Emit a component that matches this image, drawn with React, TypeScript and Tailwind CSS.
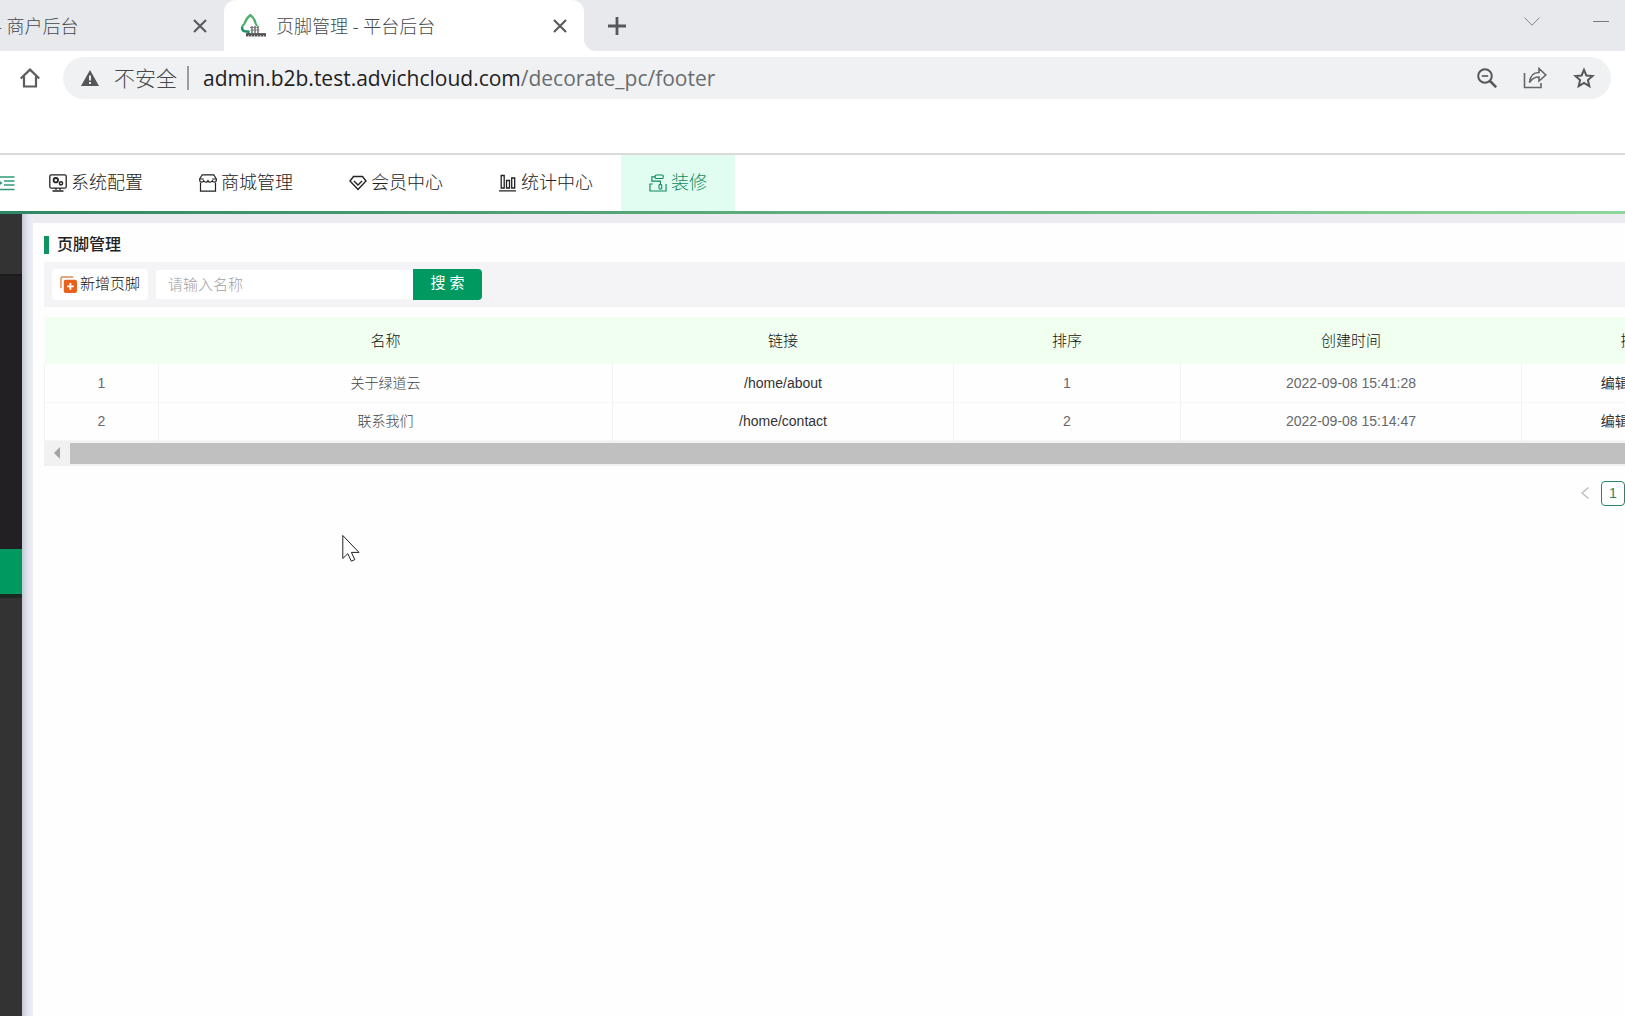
import { useState, type FormEvent, type ReactNode } from 'react';

type FooterRow = {
  id: number;
  name: string;
  link: string;
  sort: number;
  createdAt: string;
};

const rows: FooterRow[] = [
  { id: 1, name: '关于绿道云', link: '/home/about', sort: 1, createdAt: '2022-09-08 15:41:28' },
  { id: 2, name: '联系我们', link: '/home/contact', sort: 2, createdAt: '2022-09-08 15:14:47' },
];

const CloseIcon = () => (
  <svg className="size-4" viewBox="0 0 16 16" fill="none" stroke="#5a5d60" strokeWidth="2.2">
    <path d="M2 2l12 12M14 2L2 14" />
  </svg>
);

const LogoIcon = () => (
  <svg className="h-6 w-7" viewBox="0 0 28 24" fill="none">
    <path
      d="M9 17.5H6C3 17.5 1.500 15.500 2.200 13c.5-1.700 1.800-2 2.300-3.500C5.500 6.500 7 3.500 10.500 1c3 2.500 4.500 5 5.200 8.500.3 1 1 1.500 1.300 2.500"
      stroke="#4fae6b"
      strokeWidth="2.200"
    />
    <path d="M2.200 13c-.5 3 1.500 4.500 3.800 4.500h2.500v4" stroke="#1f8f68" strokeWidth="2.200" />
    <path d="M10 13.500h9M10.500 16h9" stroke="#888" strokeWidth="1.200" />
    <path d="M12 12v7M15 12v7M18 12v7" stroke="#777" strokeWidth="1.600" />
    <path d="M6 20.800h20" stroke="#555" strokeWidth="3.400" />
    <path d="M8 22h18" stroke="#fff" strokeWidth="1" strokeDasharray="1 2" />
  </svg>
);

const ConfigIcon = () => (
  <svg className="size-[18px]" viewBox="0 0 18 18" fill="none" stroke="currentColor" strokeWidth="1.300">
    <rect x=".8" y=".8" width="16.400" height="13.400" rx="1.500" />
    <circle cx="6.800" cy="6.200" r="2.200" strokeWidth="1.800" />
    <circle cx="12" cy="9.300" r="1.600" strokeWidth="1.500" />
    <path d="M7 14v2M11 14v2M3.500 17h11" />
  </svg>
);

const ShopIcon = () => (
  <svg className="size-[18px]" viewBox="0 0 18 18" fill="none" stroke="currentColor" strokeWidth="1.200">
    <path d="M3.200.8h11.600L17.300 5v1.500c0 2-3 2-4 .2-1 2-3.500 2-4.300 0-.8 2-3.300 2-4.300 0-1 1.800-4 1.800-4-.2V5z" />
    <path d="M.8 5h4M13.200 5h4M1.500 8.500v8.700h15V8.500" />
  </svg>
);

const MemberIcon = () => (
  <svg className="size-[18px]" viewBox="0 0 18 18" fill="none" stroke="currentColor" strokeWidth="1.400">
    <path d="M4.500 2.500h9l3.500 4.500-8 8.500L1 7z" />
    <path d="M5 7l4 4 4-4" />
  </svg>
);

const ChartIcon = () => (
  <svg className="size-[18px]" viewBox="0 0 18 18" fill="none" stroke="currentColor" strokeWidth="1.300">
    <path d="M0 16.800h17M2.200 1.500h3v12.500h-3zM7.500 6.500h3v7.500h-3zM12.700 4h3v10h-3z" />
  </svg>
);

const DecorateIcon = () => (
  <svg className="size-[18px]" viewBox="0 0 19 19" fill="none" stroke="currentColor" strokeWidth="1.200">
    <rect x="6.500" y="1" width="8.500" height="3.800" rx="1.200" />
    <path d="M6.500 3H3v4.500h9V11" />
    <rect x="10.500" y="11" width="3" height="5" rx="1.500" />
    <path d="M4 10.500H1v7.500h17v-7.500" />
  </svg>
);

const menus: { label: string; icon: ReactNode; active?: boolean }[] = [
  { label: '系统配置', icon: <ConfigIcon /> },
  { label: '商城管理', icon: <ShopIcon /> },
  { label: '会员中心', icon: <MemberIcon /> },
  { label: '统计中心', icon: <ChartIcon /> },
  { label: '装修', icon: <DecorateIcon />, active: true },
];

const BrowserTabs = () => (
  <div className="flex h-[51px] bg-[#e8e9ed] font-['Noto_Sans','Noto_Sans_CJK_SC',sans-serif] text-lg font-light text-[#46494c]">
    <div className="flex w-[224px] items-center justify-between rounded-br-xl bg-[#e8e9ed] pr-4">
      <span className="-ml-1 whitespace-pre">- 商户后台</span>
      <button aria-label="关闭"><CloseIcon /></button>
    </div>
    <div className="flex w-[360px] items-center rounded-t-xl bg-white px-4">
      <LogoIcon />
      <span className="ml-2 flex-1">页脚管理 - 平台后台</span>
      <button aria-label="关闭"><CloseIcon /></button>
    </div>
    <div className="flex flex-1 bg-white">
      <div className="flex flex-1 items-center justify-between rounded-bl-xl bg-[#e8e9ed] pl-6">
        <button aria-label="新标签页">
          <svg className="size-[18px]" viewBox="0 0 18 18" stroke="#55585b" strokeWidth="2.800">
            <path d="M0 9h18M9 0v18" />
          </svg>
        </button>
        <div className="flex items-center gap-[53px] pb-2 pr-4">
          <button aria-label="搜索标签页">
            <svg className="h-[9px] w-4" viewBox="0 0 16 9" fill="none" stroke="#85878b">
              <path d="M.5.5L8 8.200 15.500.5" />
            </svg>
          </button>
          <button aria-label="最小化" className="h-px w-4 bg-[#77797d]" />
        </div>
      </div>
    </div>
  </div>
);

const AddressBar = () => (
  <div className="flex h-[104px] items-start border-b-2 border-[#dadada] pt-[6px]">
    <button aria-label="主页" className="flex h-[42px] w-[63px] items-center pl-5">
      <svg className="size-5" viewBox="0 0 20 20" fill="none" stroke="#5a5d60" strokeWidth="2.200">
        <path d="M.8 10.500L10 1.600l9.200 8.900M4 8.500V18.500h12V8.500" />
      </svg>
    </button>
    <div className="mr-[14px] flex h-[42px] flex-1 items-center rounded-full bg-[#eff1f3] pl-[18px] pr-4">
      <svg className="h-4 w-[18px]" viewBox="0 0 18 16">
        <path d="M9 0l9 16H0z" fill="#54575a" />
        <path d="M9 5.500v5M9 12v2" stroke="#fff" strokeWidth="1.800" />
      </svg>
      <span className="ml-[15px] pt-px text-[21px] font-light text-[#46494c]">不安全</span>
      <span className="ml-[10px] h-6 w-[2px] bg-[#9a9da0]" />
      <span className="ml-[14px] flex-1 pt-px font-['Open_Sans','Noto_Sans_CJK_SC',sans-serif] text-[21px] text-[#1f2123]">
        admin.b2b.test.advichcloud.com<span className="text-[#6a6d70]">/decorate_pc/footer</span>
      </span>
      <div className="flex items-center gap-[26px]">
        <button aria-label="缩放">
          <svg className="size-5" viewBox="0 0 20 20" fill="none" stroke="#55585b" strokeWidth="2">
            <circle cx="8" cy="8" r="6.800" />
            <path d="M4.800 8h6.400" strokeWidth="1.600" />
            <path d="M13 13l6.200 6.200" strokeWidth="2.600" />
          </svg>
        </button>
        <button aria-label="分享">
          <svg className="h-[22px] w-6" viewBox="0 0 24 22" fill="none" stroke="#65686b" strokeWidth="1.600">
            <path d="M1.500 6v14.500h16.500V16" />
            <path d="M6.500 15.500C7 9 10.500 5.500 16 5.500v-4L22.800 8 16 14v-4c-4.500 0-7 1.500-9.500 5.500z" />
          </svg>
        </button>
        <button aria-label="收藏">
          <svg className="size-[22px]" viewBox="0 0 22 22" fill="none" stroke="#55585b" strokeWidth="2">
            <path d="M11 2.800l2.400 5.700 6.200.5-4.700 4.100 1.400 6L11 15.900l-5.300 3.200 1.400-6L2.400 9l6.200-.5z" />
          </svg>
        </button>
      </div>
    </div>
  </div>
);

const TopNav = () => (
  <header>
    <nav className="flex h-14 items-stretch text-lg font-light text-[#222]">
      <button aria-label="收起菜单" className="flex w-[21px] items-center text-[#2f9a78]">
        <svg className="h-4 w-[15px]" viewBox="0 0 15 16" fill="none" stroke="currentColor" strokeWidth="1.300">
          <path d="M0 2h14.500M4 6h10.500M4 10h10.500M0 14.500h14.500" />
          <path d="M0 6v4l2.500-2z" fill="currentColor" stroke="none" />
        </svg>
      </button>
      {menus.map((menu) => (
        <a
          key={menu.label}
          href="#"
          className={
            menu.active
              ? 'flex items-center gap-1 bg-[#e1fdf1] px-7 text-[#0d8c60]'
              : 'flex items-center gap-1 px-7'
          }
        >
          {menu.icon}
          <span>{menu.label}</span>
        </a>
      ))}
    </nav>
    <div className="h-[3px] bg-gradient-to-r from-[#2f8763] to-[#8fd69a]" />
  </header>
);

const Sidebar = () => (
  <aside className="flex w-[22px] flex-col bg-[#333]">
    <div className="h-[60px] bg-[#333]" />
    <div className="h-[275px] border-t-2 border-[#1b1b1c] bg-[#232023]" />
    <a href="#" aria-label="页脚管理" className="h-[49px] border-b-4 border-[#1d2a23] bg-[#009a61]" />
  </aside>
);

const FooterTable = () => (
  <div className="mt-[10px] overflow-hidden">
    <table className="w-[1705px] table-fixed border-collapse text-center text-sm">
      <colgroup>
        <col className="w-[114px]" />
        <col className="w-[454px]" />
        <col className="w-[341px]" />
        <col className="w-[227px]" />
        <col className="w-[341px]" />
        <col className="w-[228px]" />
      </colgroup>
      <thead>
        <tr className="h-[47px] bg-[#f0fff0] text-[15px] text-[#111]">
          <th className="font-light" aria-label="序号" />
          <th className="font-light">名称</th>
          <th className="font-light">链接</th>
          <th className="font-light">排序</th>
          <th className="font-light">创建时间</th>
          <th className="font-light">操作</th>
        </tr>
      </thead>
      <tbody className="text-[#66686b]">
        {rows.map((row) => (
          <tr key={row.id} className="h-[38px] border-b border-[#f4f7f6]">
            <td className="border-x border-[#f1f3f3]">{row.id}</td>
            <td className="border-r border-[#f1f3f3] font-light text-[#444]">{row.name}</td>
            <td className="border-r border-[#f1f3f3] text-[#333]">{row.link}</td>
            <td className="border-r border-[#f1f3f3]">{row.sort}</td>
            <td className="border-r border-[#f1f3f3]">{row.createdAt}</td>
            <td className="text-[#333]">
              <div className="flex justify-center gap-[14px]">
                <button>编辑</button>
                <button>删除</button>
              </div>
            </td>
          </tr>
        ))}
      </tbody>
    </table>
    {/* horizontal scroll bar */}
    <div className="flex h-[25px] items-center bg-[#f1f1f1]">
      <button aria-label="向左滚动" className="flex w-[26px] items-center pl-[10px]">
        <svg className="h-3 w-[6px]" viewBox="0 0 6 12" fill="#a3a3a3">
          <path d="M6 0v12L0 6z" />
        </svg>
      </button>
      <div className="h-[21px] flex-1 bg-[#c0c0c0]" />
    </div>
  </div>
);

export default function App() {
  const [keyword, setKeyword] = useState('');

  const handleSearch = (e: FormEvent<HTMLFormElement>) => {
    e.preventDefault();
  };

  return (
    <div className="relative flex min-h-screen flex-col overflow-hidden bg-white font-['Liberation_Sans','Noto_Sans_CJK_SC',sans-serif]">
      <BrowserTabs />
      <AddressBar />
      <TopNav />
      <div className="flex flex-1">
        <Sidebar />
        <div className="flex flex-1 overflow-hidden bg-[#ecebf2]">
          <div className="w-[11px] bg-gradient-to-r from-[#c3c8d2] via-[#e0e4ec] to-[#eeeff5]" />
          <main className="mt-[9px] min-w-0 flex-1 bg-[#fefefe] pl-[11px] pt-2">
            <h1 className="flex h-[27px] items-center gap-2 text-base font-medium text-[#222]">
              <span className="h-[18px] w-[5px] bg-[#10935f]" />
              页脚管理
            </h1>
            <div className="mt-1 flex h-[45px] items-center bg-[#f4f4f6] pl-2">
              <button className="flex h-[31px] items-center gap-[3px] rounded-sm bg-white px-2 text-[15px] font-light text-[#111]">
                <svg className="size-[17px]" viewBox="0 0 18 18" fill="none">
                  <path d="M1 13V2.500C1 1.500 1.500 1 2.500 1H14" stroke="#d98a5c" strokeWidth="1.500" />
                  <rect x="4" y="4" width="14" height="14" rx="2" fill="#e8611c" />
                  <path d="M11 7.500v7M7.500 11h7" stroke="#fff" strokeWidth="2" />
                </svg>
                新增页脚
              </button>
              <form onSubmit={handleSearch} className="ml-2 flex items-center">
                <input
                  type="text"
                  aria-label="名称"
                  placeholder="请输入名称"
                  value={keyword}
                  onChange={(e) => setKeyword(e.target.value)}
                  className="h-[29px] w-[257px] bg-white px-3 text-[15px] font-light outline-none placeholder:text-[#a0a2a6]"
                />
                <button
                  type="submit"
                  className="h-[31px] w-[69px] rounded-r-[4px] bg-[#009a60] pb-[2px] text-[15px] text-white"
                >
                  搜 索
                </button>
              </form>
            </div>
            <FooterTable />
            <div className="mt-[15px] flex items-center justify-end gap-3">
              <button aria-label="上一页">
                <svg className="h-3 w-2" viewBox="0 0 8 12" fill="none" stroke="#b9b9b9" strokeWidth="1.200">
                  <path d="M7.500.5L1 6l6.500 5.500" />
                </svg>
              </button>
              <button className="h-[25px] w-6 rounded-[4px] border border-[#2a8567] text-sm text-[#2a8567]">1</button>
            </div>
          </main>
        </div>
      </div>
      {/* mouse pointer */}
      <svg className="absolute left-[342px] top-[534px] h-7 w-[18px]" viewBox="0 0 18 28" fill="#fff" stroke="#222">
        <path d="M.8 1.500v23l5-4.800 3.500 7.500 3.500-1.600-3.400-7.200H17z" />
      </svg>
    </div>
  );
}
